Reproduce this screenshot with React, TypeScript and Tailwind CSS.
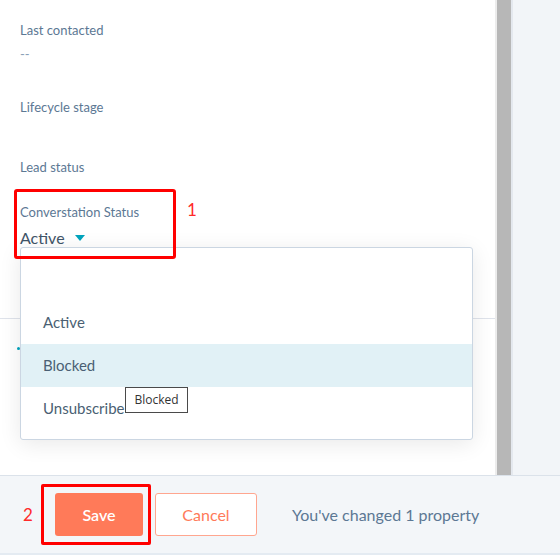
import React from "react";

export default function App() {
  const font = { fontFamily: "Lato, 'Open Sans', sans-serif" };
  return (
    <div className="w-[560px] h-[558px] bg-white flex flex-col overflow-hidden" style={font}>
      <div className="flex h-[475px]">
        {/* main panel */}
        <div className="relative w-[495px] h-full bg-white">
          <div className="pl-[20px] pt-[22px] flex flex-col">
            <div className="text-[13px] leading-[16px] text-[#5c7894]">Last contacted</div>
            <div className="text-[13px] leading-[16px] text-[#8aa0b8] mt-[8px]">--</div>
            <div className="text-[13px] leading-[16px] text-[#5c7894] mt-[37px]">Lifecycle stage</div>
            <div className="text-[13px] leading-[16px] text-[#5c7894] mt-[44px]">Lead status</div>
            <div className="relative mt-[29px] text-[13px] leading-[16px] text-[#5c7894]">Converstation Status</div>
            <div className="flex items-center gap-[10px] mt-[8px] text-[16px] leading-[20px] text-[#3f5468]">
              <span>Active</span>
              <svg width="10" height="6" viewBox="0 0 10 6"><path d="M0 0 L10 0 L5 6 Z" fill="#00a4bd" /></svg>
            </div>
          </div>
          <div className="mt-[70px] border-t border-[#dfe3eb]" />
          <div className="ml-[17px] mt-[28px] w-[3px] h-[3px] rounded-full bg-[#00a4bd]" />

          {/* dropdown */}
          <div className="absolute left-[20px] top-[247px] w-[453px] h-[193px] bg-white border border-[#cbd6e2] rounded-[3px] shadow-[0_4px_22px_rgba(0,0,0,0.09)] flex flex-col pt-[52px]">
            <div className="h-[44px] flex items-center pl-[22px] text-[15px] text-[#4a5f73]">Active</div>
            <div className="h-[43px] flex items-center pl-[22px] text-[15px] text-[#4a5f73] bg-[#e1f1f6]">Blocked</div>
            <div className="h-[43px] flex items-center pl-[22px] text-[15px] text-[#4a5f73]">Unsubscribe</div>
          </div>

          {/* red box 1 */}
          <div className="absolute left-[14px] top-[189px] w-[162px] h-[70px] border-[3px] border-[#ff0000] rounded-[3px]" />
          <div className="absolute left-[187px] top-[199px] text-[17px] leading-[22px] text-[#ff2a2a]">1</div>

          {/* tooltip */}
          <div className="absolute left-[125px] top-[387px] w-[63px] h-[26px] bg-white border border-[#4a4a4a] flex items-center justify-center text-[12px] text-[#333]" style={{ fontFamily: "'Open Sans', Lato, sans-serif" }}>
            Blocked
          </div>
        </div>
        {/* scrollbar */}
        <div className="w-[2px] h-full bg-[#ececec]" />
        <div className="w-[14px] h-full bg-[#b7b7b7]" />
        <div className="w-[2px] h-full bg-[#e4e8ee]" />
        <div className="flex-1 h-full bg-[#f2f5f8]" />
      </div>
      {/* footer */}
      <div className="relative h-[80px] bg-[#f3f6f9] border-t border-[#dbe2ea] border-b-[2px] border-b-[#e4ebf2] flex items-center">
        <div className="w-[41px] pl-[23px] text-[17px] text-[#ff2a2a]">2</div>
        <div className="w-[110px] h-[61px] border-[3px] border-[#ff0000] rounded-[2px] flex items-center pl-[11px]">
          <button className="w-[88px] h-[43px] rounded-[3px] bg-[#ff7a59] text-white text-[16px] font-semibold">Save</button>
        </div>
        <button className="ml-[4px] w-[102px] h-[43px] rounded-[3px] bg-white border border-[#ffa68f] text-[#ff7a59] text-[16px]">Cancel</button>
        <div className="ml-[35px] text-[16px] text-[#5c7894]">You've changed 1 property</div>
      </div>
    </div>
  );
}
